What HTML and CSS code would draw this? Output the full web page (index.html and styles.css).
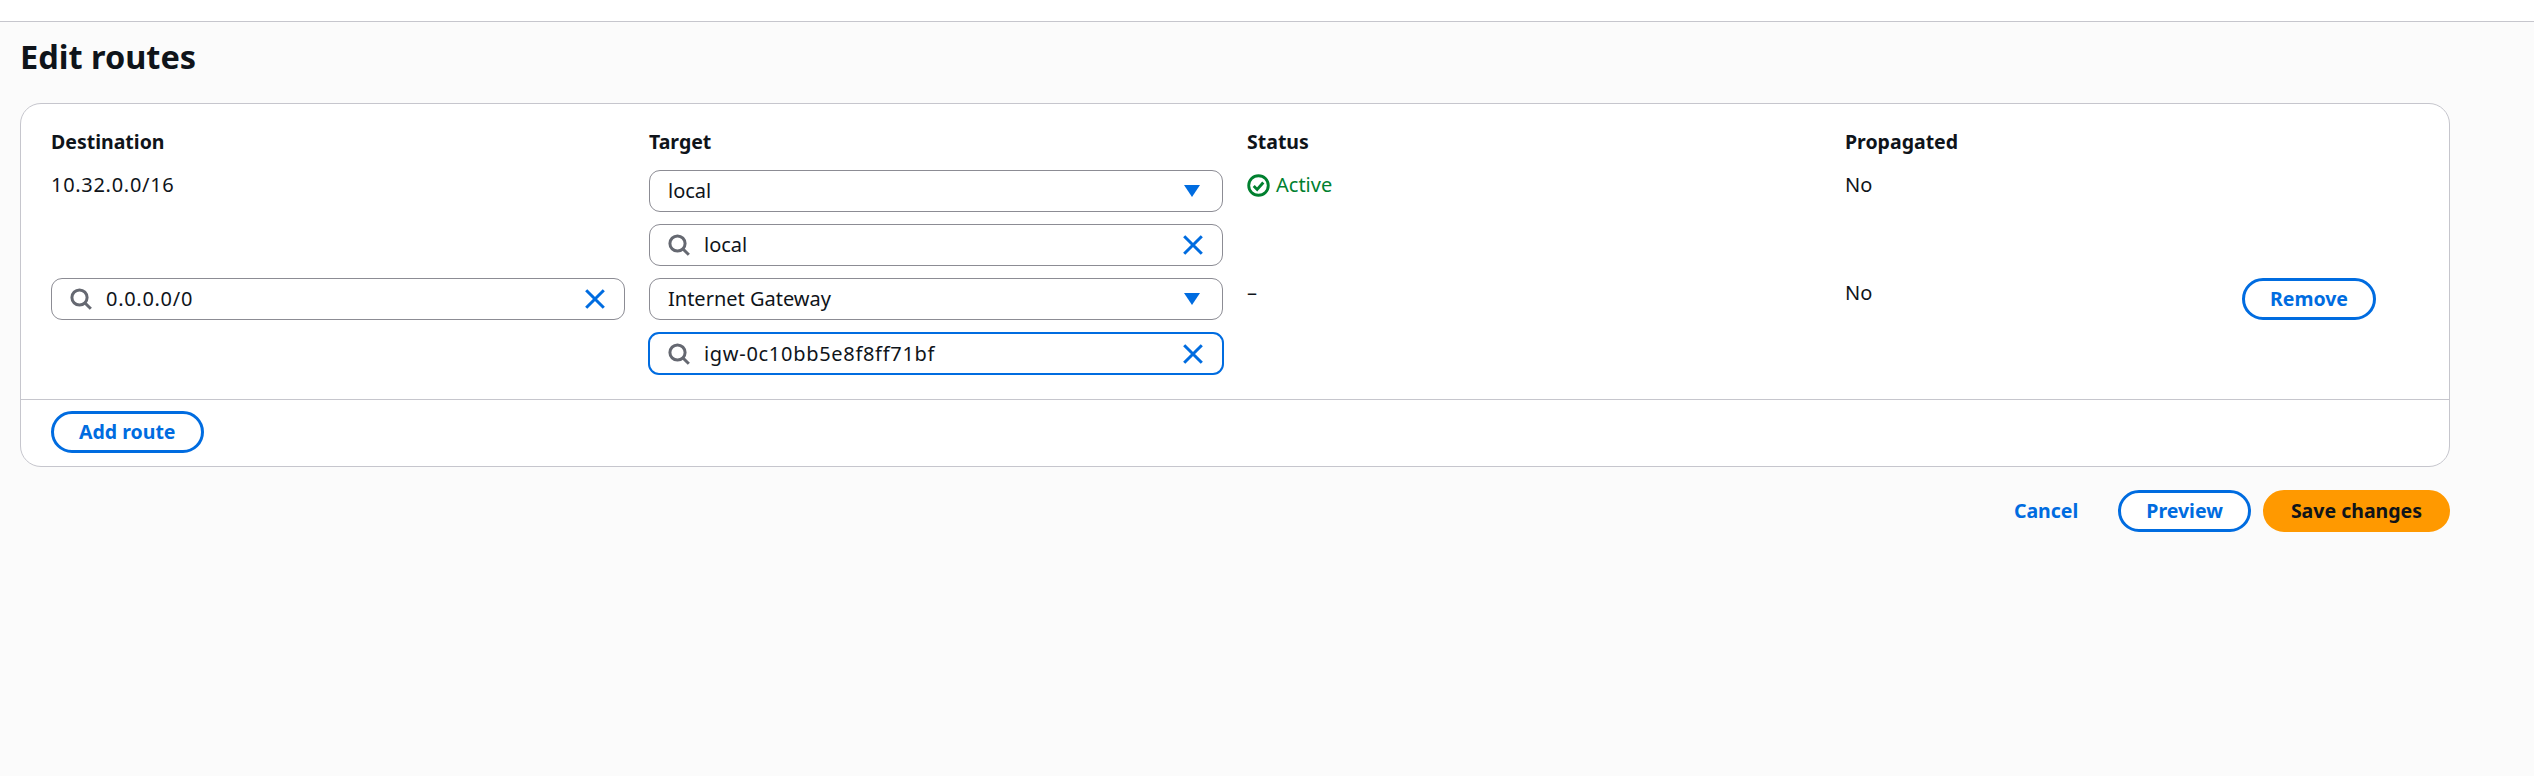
FILE: index.html
```html
<!DOCTYPE html>
<html lang="en">
<head>
<meta charset="utf-8">
<title>Edit routes</title>
<link rel="stylesheet" href="styles.css">
</head>
<body>
<svg class="defs" width="0" height="0" aria-hidden="true">
  <symbol id="i-search" viewBox="0 0 22 22"><circle cx="9.5" cy="9.5" r="7.6" fill="none" stroke="#656871" stroke-width="3"/><path d="M15 15l5.8 5.8" fill="none" stroke="#656871" stroke-width="3"/></symbol>
  <symbol id="i-x" viewBox="0 0 20 20"><path d="M1.2 1.2l17.6 17.6M18.8 1.2L1.2 18.8" fill="none" stroke="#006ce0" stroke-width="3"/></symbol>
  <symbol id="i-caret" viewBox="0 0 16 12"><path d="M0 0h16L8 12z" fill="#006ce0"/></symbol>
</svg>
<header class="topbar"></header>
<main class="page">
  <h1 class="title">Edit routes</h1>
  <section class="card">
    <div class="routes">
      <div class="col-head">Destination</div>
      <div class="col-head">Target</div>
      <div class="col-head">Status</div>
      <div class="col-head">Propagated</div>

      <div class="cell num">10.32.0.0/16</div>
      <div class="stack">
        <div class="field select"><span class="value">local</span><svg class="caret"><use href="#i-caret"/></svg></div>
        <div class="field"><svg class="search"><use href="#i-search"/></svg><span class="value">local</span><svg class="clear"><use href="#i-x"/></svg></div>
      </div>
      <div class="cell status">
        <svg class="check" viewBox="0 0 24 24"><circle cx="12" cy="12" r="10.2" fill="none" stroke="#00802f" stroke-width="3"/><path d="M7 12.5l3.6 3.6 6.4-7.2" fill="none" stroke="#00802f" stroke-width="3"/></svg>
        <span>Active</span>
      </div>
      <div class="cell">No</div>

      <div class="field"><svg class="search"><use href="#i-search"/></svg><span class="value num">0.0.0.0/0</span><svg class="clear"><use href="#i-x"/></svg></div>
      <div class="stack">
        <div class="field select"><span class="value">Internet Gateway</span><svg class="caret"><use href="#i-caret"/></svg></div>
        <div class="field focused"><svg class="search"><use href="#i-search"/></svg><span class="value num">igw-0c10bb5e8f8ff71bf</span><svg class="clear"><use href="#i-x"/></svg></div>
      </div>
      <div class="cell">–</div>
      <div class="last">
        <span class="cell">No</span>
        <button class="btn" type="button">Remove</button>
      </div>
    </div>
    <div class="card-foot">
      <button class="btn add" type="button">Add route</button>
    </div>
  </section>
  <div class="actions">
    <a class="cancel" href="#">Cancel</a>
    <button class="btn preview" type="button">Preview</button>
    <button class="btn save" type="button">Save changes</button>
  </div>
</main>
</body>
</html>
```
FILE: styles.css
```css
* { box-sizing: border-box; }
html, body { margin: 0; height: 100%; }
body {
  background: #fbfbfb;
  color: #0f141a;
  font-family: "Noto Sans", "Open Sans", sans-serif;
  font-size: 20px;
  line-height: 26px;
  overflow: hidden;
}
.defs { display: block; height: 0; }
.topbar { height: 22px; background: #fff; border-bottom: 1px solid #c6c6cd; }
.page { padding: 15px 84px 0 20px; }
.title { margin: 0 0 26px; font-size: 32.5px; line-height: 40px; font-weight: 700; }
.card {
  background: #fff;
  border: 1px solid #c6c6cd;
  border-radius: 21px;
  height: 364px;
}
.routes {
  display: grid;
  grid-template-columns: 574px 574px 574px 1fr;
  column-gap: 24px;
  padding: 25px 0 0 30px;
  height: 296px;
  border-bottom: 1px solid #c6c6cd;
  align-items: start;
  align-content: start;
}
.col-head { font-weight: 700; font-size: 19.5px; height: 41px; }
.cell { display: block; padding-top: 2px; }
.num { letter-spacing: .7px; }
.stack { display: flex; flex-direction: column; gap: 12px; margin-bottom: 12px; }
.field {
  display: flex;
  align-items: center;
  height: 42px;
  padding: 0 19px 0 18px;
  background: #fff;
  border: 1px solid #8c8c94;
  border-radius: 11px;
}
.field.focused { border: 2px solid #006ce0; margin: 0 -1px; height: 43px; padding: 0 19px 0 18px; }
.value { flex: 1; white-space: nowrap; }
.search { width: 22px; height: 22px; margin-right: 14px; flex: none; }
.clear { width: 20px; height: 20px; flex: none; }
.caret { width: 16px; height: 12px; flex: none; margin-right: 3px; }
.status { display: flex; align-items: center; gap: 6px; color: #00802f; }
.check { width: 23px; height: 23px; flex: none; }
.last { display: flex; justify-content: space-between; align-items: flex-start; padding-right: 73px; }
.btn {
  height: 42px;
  padding: 0 25px;
  background: #fff;
  border: 3px solid #006ce0;
  border-radius: 21px;
  color: #006ce0;
  font: 700 19.5px/26px "Noto Sans", "Open Sans", sans-serif;
  white-space: nowrap;
}
.card-foot { padding: 11px 0 0 30px; }
.actions { display: flex; justify-content: flex-end; align-items: center; margin-top: 23px; }
.cancel { color: #006ce0; font-weight: 700; font-size: 19.5px; text-decoration: none; margin-right: 40px; }
.preview { margin-right: 12px; }
.save { background: #ff9900; border-color: #ff9900; color: #0f141a; }
```
